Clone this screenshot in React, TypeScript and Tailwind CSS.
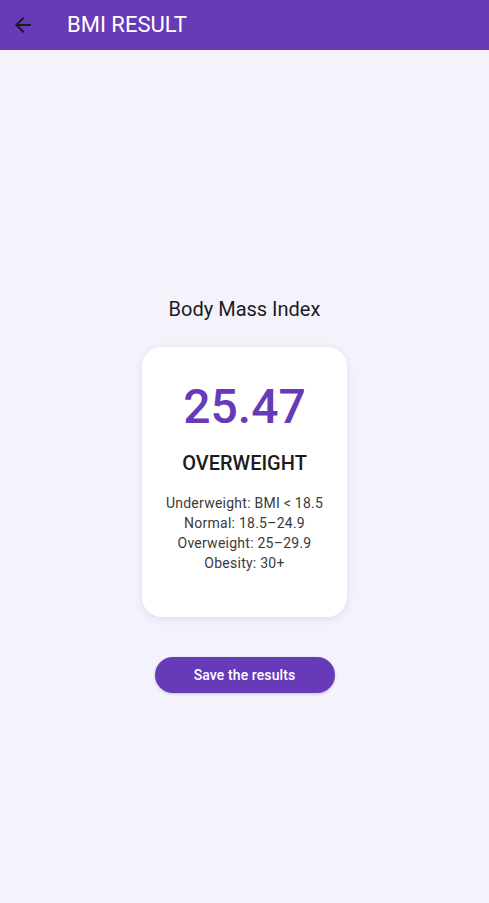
export default function App() {
  return (
    <div
      className="min-h-[903px] w-full flex flex-col bg-[#f4f3fc]"
      style={{ fontFamily: 'Roboto, "Noto Sans", sans-serif' }}
    >
      <header className="h-[50px] bg-[#673ab7] flex items-center shrink-0">
        <button className="w-[24px] h-[24px] ml-[11px] text-[#1d1b20]">
          <svg viewBox="0 0 24 24" width="24" height="24" fill="currentColor">
            <path d="M20 11H7.83l5.59-5.59L12 4l-8 8 8 8 1.41-1.41L7.83 13H20v-2z" />
          </svg>
        </button>
        <h1 className="ml-[32px] text-[22px] leading-[28px] text-white">BMI RESULT</h1>
      </header>

      <main className="flex flex-col items-center pt-[245px]">
        <p className="text-[20px] leading-[28px] text-[#1d1b20]">Body Mass Index</p>

        <div className="mt-[24px] w-[205px] rounded-[20px] bg-white shadow-[0_2px_8px_rgba(60,40,120,0.12)] flex flex-col items-center pt-[32px] pb-[44px]">
          <p className="text-[48px] leading-[56px] font-medium text-[#673ab7]">25.47</p>
          <p className="mt-[14px] text-[20px] leading-[28px] font-medium text-[#1d1b20]">
            OVERWEIGHT
          </p>
          <div className="mt-[16px] flex flex-col items-center text-[14px] leading-[20px] tracking-[0.25px] text-[#3a3a3a]">
            <span>Underweight: BMI &lt; 18.5</span>
            <span>Normal: 18.5–24.9</span>
            <span>Overweight: 25–29.9</span>
            <span>Obesity: 30+</span>
          </div>
        </div>

        <button className="mt-[40px] w-[180px] h-[36px] rounded-full bg-[#673ab7] text-white text-[14px] font-medium tracking-[0.1px] shadow-[0_1px_3px_rgba(0,0,0,0.2)]">
          Save the results
        </button>
      </main>
    </div>
  );
}
